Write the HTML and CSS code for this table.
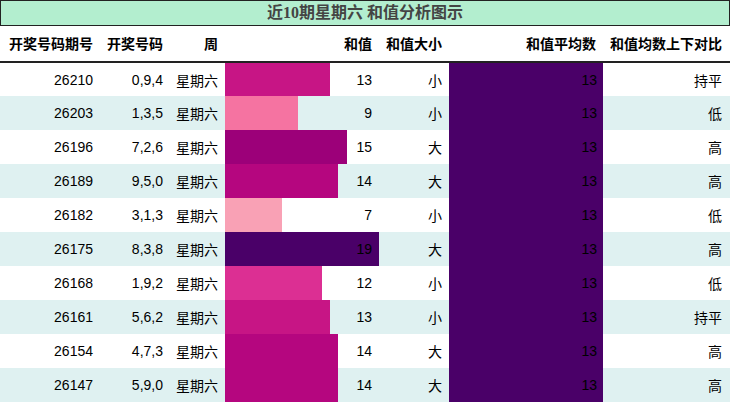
FILE: index.html
```html
<!DOCTYPE html>
<html lang="zh">
<head>
<meta charset="utf-8">
<title>近10期星期六 和值分析图示</title>
<link rel="stylesheet" href="styles.css">
</head>
<body>
<div class="chart">
  <div class="title">近10期星期六 和值分析图示</div>
  <table class="grid">
    <colgroup>
      <col class="c1"><col class="c2"><col class="c3"><col class="c4"><col class="c5"><col class="c6"><col class="c7">
    </colgroup>
    <thead>
      <tr><th>开奖号码期号</th><th>开奖号码</th><th>周</th><th>和值</th><th>和值大小</th><th>和值平均数</th><th>和值均数上下对比</th></tr>
    </thead>
    <tbody>
      <tr><td>26210</td><td>0,9,4</td><td>星期六</td><td class="bar" style="--w:68.42%;--c:#c71585">13</td><td>小</td><td class="mean">13</td><td>持平</td></tr>
      <tr><td>26203</td><td>1,3,5</td><td>星期六</td><td class="bar" style="--w:47.37%;--c:#f573a1">9</td><td>小</td><td class="mean">13</td><td>低</td></tr>
      <tr><td>26196</td><td>7,2,6</td><td>星期六</td><td class="bar" style="--w:78.95%;--c:#9c0079">15</td><td>大</td><td class="mean">13</td><td>高</td></tr>
      <tr><td>26189</td><td>9,5,0</td><td>星期六</td><td class="bar" style="--w:73.68%;--c:#b5067f">14</td><td>大</td><td class="mean">13</td><td>高</td></tr>
      <tr><td>26182</td><td>3,1,3</td><td>星期六</td><td class="bar" style="--w:36.84%;--c:#f9a1b5">7</td><td>小</td><td class="mean">13</td><td>低</td></tr>
      <tr><td>26175</td><td>8,3,8</td><td>星期六</td><td class="bar" style="--w:100%;--c:#4a0068">19</td><td>大</td><td class="mean">13</td><td>高</td></tr>
      <tr><td>26168</td><td>1,9,2</td><td>星期六</td><td class="bar" style="--w:63.16%;--c:#dc2f93">12</td><td>小</td><td class="mean">13</td><td>低</td></tr>
      <tr><td>26161</td><td>5,6,2</td><td>星期六</td><td class="bar" style="--w:68.42%;--c:#c71585">13</td><td>小</td><td class="mean">13</td><td>持平</td></tr>
      <tr><td>26154</td><td>4,7,3</td><td>星期六</td><td class="bar" style="--w:73.68%;--c:#b5067f">14</td><td>大</td><td class="mean">13</td><td>高</td></tr>
      <tr><td>26147</td><td>5,9,0</td><td>星期六</td><td class="bar" style="--w:73.68%;--c:#b5067f">14</td><td>大</td><td class="mean">13</td><td>高</td></tr>
    </tbody>
  </table>
</div>
</body>
</html>
```

FILE: styles.css
```css
* { box-sizing: border-box; }
html, body { margin: 0; padding: 0; background: #fff; }
body { width: 730px; height: 403px; overflow: hidden; }

.chart { width: 730px; }

.title {
  height: 26px;
  line-height: 24px;
  border: 1px solid #222;
  background: #b3eecf;
  color: #444;
  text-align: center;
  font-family: "Liberation Serif", "Noto Sans CJK SC", serif;
  font-weight: bold;
  font-size: 16px;
}

.grid {
  width: 730px;
  table-layout: fixed;
  border-collapse: collapse;
  border-spacing: 0;
  font-family: "Liberation Sans", "Noto Sans CJK SC", sans-serif;
  font-size: 14px;
  color: #000;
}

.c1 { width: 100px; }
.c2 { width: 70px; }
.c3 { width: 55px; }
.c4 { width: 154px; }
.c5 { width: 70px; }
.c6 { width: 154px; }
.c7 { width: 127px; }

.grid th {
  height: 36px;
  padding: 0 7px 2px 0;
  text-align: right;
  font-weight: bold;
  color: #000;
  font-family: "Noto Sans CJK SC", sans-serif;
  border-bottom: 2px solid #222;
  white-space: nowrap;
}

.grid td {
  height: 34px;
  padding: 0 7px 0 0;
  text-align: right;
  white-space: nowrap;
}

.grid tbody tr:nth-child(even) { background: #dff1f1; }

.grid td.bar {
  background: linear-gradient(to right, var(--c) 0, var(--c) var(--w), transparent var(--w));
}

.grid td.mean {
  background: #4a0068;
  padding-right: 6px;
  color: #000;
}

.grid td:last-child, .grid th:last-child { padding-right: 8px; }
```
